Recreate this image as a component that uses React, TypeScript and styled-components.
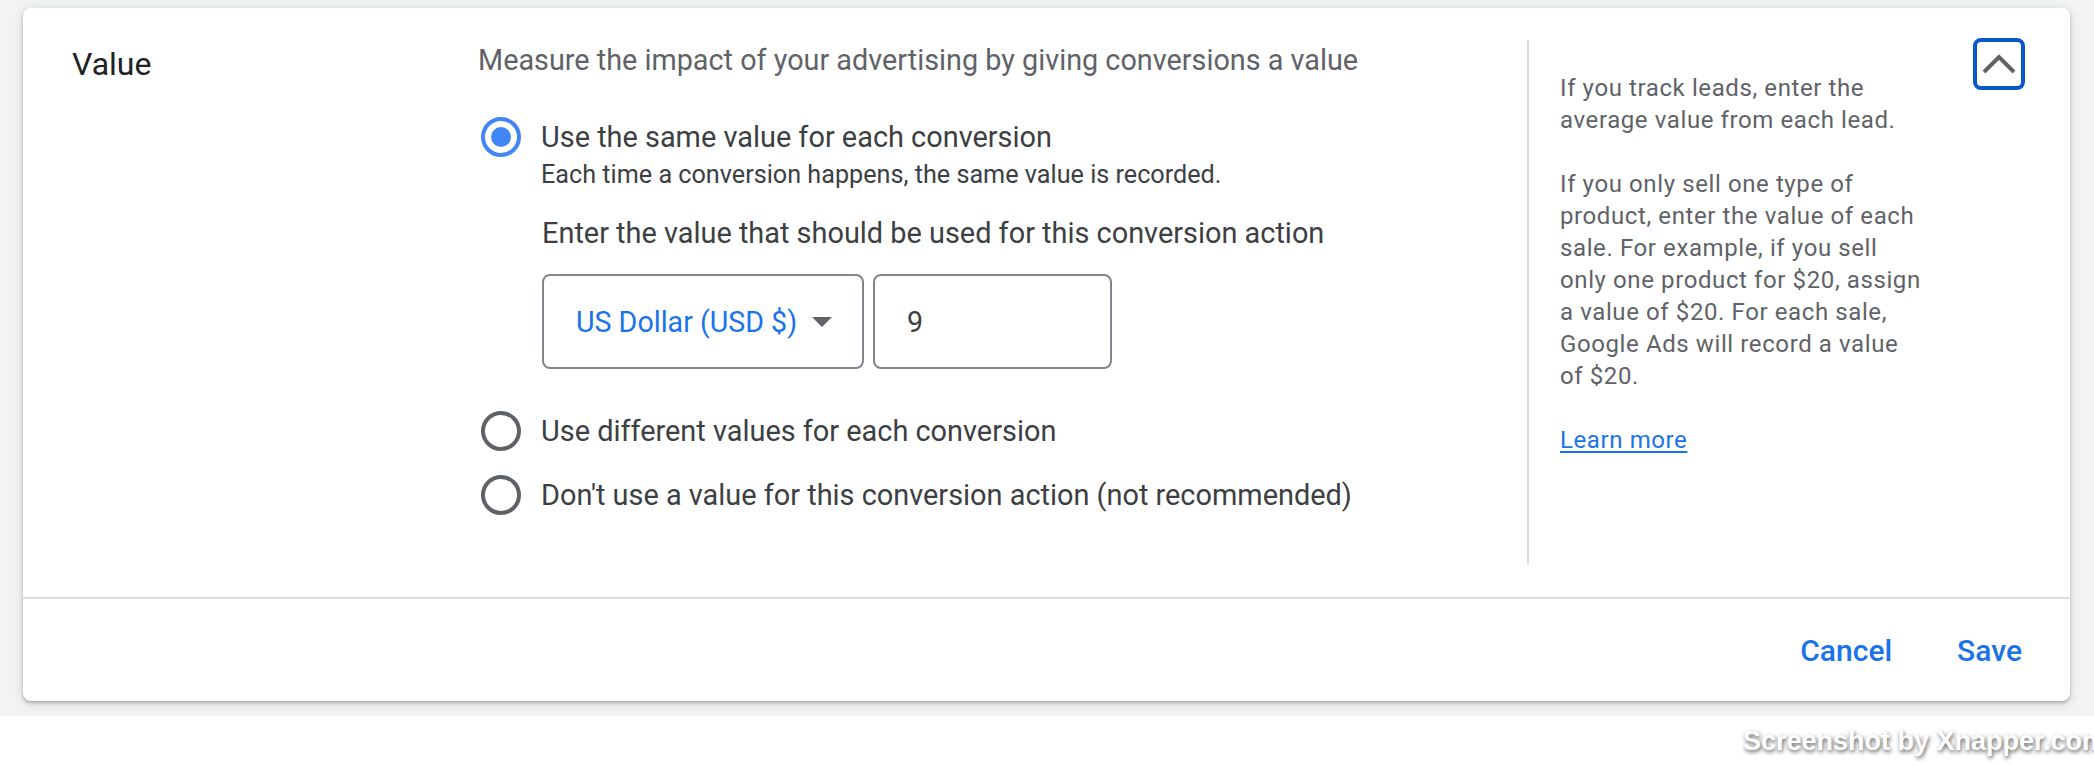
import React from "react";
import styled, { createGlobalStyle } from "styled-components";

const GlobalStyle = createGlobalStyle`
  html, body {
    margin: 0;
    padding: 0;
    background: #ffffff;
  }
  body {
    font-family: Roboto, "Liberation Sans", Arial, sans-serif;
    -webkit-font-smoothing: antialiased;
  }
`;

const helpLines = [
  ["If you track leads, enter the", "average value from each lead."],
  [
    "If you only sell one type of",
    "product, enter the value of each",
    "sale. For example, if you sell",
    "only one product for $20, assign",
    "a value of $20. For each sale,",
    "Google Ads will record a value",
    "of $20.",
  ],
];

const options = [
  {
    id: "same",
    label: "Use the same value for each conversion",
    hint: "Each time a conversion happens, the same value is recorded.",
  },
  { id: "different", label: "Use different values for each conversion" },
  {
    id: "none",
    label: "Don't use a value for this conversion action (not recommended)",
  },
];

const App: React.FC = () => {
  const selected = "same";

  return (
    <>
      <GlobalStyle />
      <Page>
        <Card>
          <Body>
            <Title>Value</Title>
            <Main>
              <Intro>
                Measure the impact of your advertising by giving conversions a
                value
              </Intro>
              <Options>
                {options.map((opt) => (
                  <Option key={opt.id}>
                    <OptionRow>
                      <Radio checked={opt.id === selected} />
                      <OptionLabel>{opt.label}</OptionLabel>
                    </OptionRow>
                    {opt.hint && <Hint>{opt.hint}</Hint>}
                    {opt.id === selected && (
                      <ValueBlock>
                        <ValuePrompt>
                          Enter the value that should be used for this
                          conversion action
                        </ValuePrompt>
                        <Fields>
                          <Select>
                            <span>US Dollar (USD $)</span>
                            <Caret />
                          </Select>
                          <ValueInput>9</ValueInput>
                        </Fields>
                      </ValueBlock>
                    )}
                  </Option>
                ))}
              </Options>
            </Main>
            <Aside>
              <HelpText>
                {helpLines.map((para, i) => (
                  <HelpPara key={i}>
                    {para.map((line, j) => (
                      <React.Fragment key={j}>
                        {line}
                        {j < para.length - 1 && <br />}
                      </React.Fragment>
                    ))}
                  </HelpPara>
                ))}
                <LearnMore href="#">Learn more</LearnMore>
              </HelpText>
            </Aside>
            <CollapseButton aria-label="Collapse">
              <svg width="34" height="20" viewBox="0 0 34 20">
                <path
                  d="M2 18 L17 3 L32 18"
                  fill="none"
                  stroke="#5f6368"
                  strokeWidth="4"
                />
              </svg>
            </CollapseButton>
          </Body>
          <Footer>
            <TextButton>Cancel</TextButton>
            <TextButton>Save</TextButton>
          </Footer>
        </Card>
      </Page>
      <Watermark>Screenshot by Xnapper.com</Watermark>
    </>
  );
};

export default App;

const Page = styled.div`
  background: #f1f3f4;
  padding: 8px 24px 15px 23px;
`;

const Card = styled.div`
  background: #ffffff;
  border-radius: 8px;
  box-shadow: 0 2px 3px rgba(60, 64, 67, 0.3), 0 2px 8px 2px rgba(60, 64, 67, 0.12);
`;

const Body = styled.div`
  display: flex;
  align-items: flex-start;
  height: 589px;
  box-sizing: border-box;
  padding: 32px 45px 33px 49px;
`;

const Title = styled.div`
  width: 406px;
  flex-shrink: 0;
  font-size: 32px;
  line-height: 40px;
  margin-top: 4px;
  color: #202124;
`;

const Main = styled.div`
  flex: 1;
`;

const Intro = styled.div`
  font-size: 28.8px;
  line-height: 40px;
  color: #5f6368;
`;

const Options = styled.div`
  margin-top: 37px;
  margin-left: 3px;
  display: flex;
  flex-direction: column;
  gap: 24px;
`;

const Option = styled.div``;

const OptionRow = styled.div`
  display: flex;
  align-items: center;
  gap: 20px;
`;

const Radio = styled.span<{ checked: boolean }>`
  width: 40px;
  height: 40px;
  box-sizing: border-box;
  border-radius: 50%;
  border: 4px solid ${(p) => (p.checked ? "#4285f4" : "#5f6368")};
  display: flex;
  align-items: center;
  justify-content: center;
  flex-shrink: 0;

  &::after {
    content: "";
    width: 20px;
    height: 20px;
    border-radius: 50%;
    background: #4285f4;
    display: ${(p) => (p.checked ? "block" : "none")};
  }
`;

const OptionLabel = styled.span`
  font-size: 28.9px;
  line-height: 40px;
  color: #3c4043;
`;

const Hint = styled.div`
  margin-left: 60px;
  font-size: 25.2px;
  line-height: 36px;
  color: #3c4043;
`;

const ValueBlock = styled.div`
  margin-left: 61px;
  margin-top: 20px;
`;

const ValuePrompt = styled.div`
  font-size: 28.9px;
  line-height: 40px;
  color: #3c4043;
`;

const Fields = styled.div`
  display: flex;
  gap: 9px;
  margin-top: 21px;
  margin-bottom: 18px;
`;

const FieldBox = styled.div`
  height: 95px;
  box-sizing: border-box;
  border: 2px solid #80868b;
  border-radius: 8px;
  display: flex;
  align-items: center;
  font-size: 28.6px;
`;

const Select = styled(FieldBox)`
  width: 322px;
  padding: 0 30px 0 32px;
  justify-content: space-between;
  color: #1a73e8;
`;

const Caret = styled.span`
  width: 0;
  height: 0;
  border-left: 10px solid transparent;
  border-right: 10px solid transparent;
  border-top: 10px solid #5f6368;
`;

const ValueInput = styled(FieldBox)`
  width: 239px;
  padding-left: 32px;
  color: #3c4043;
`;

const Aside = styled.div`
  align-self: stretch;
  width: 413px;
  flex-shrink: 0;
  border-left: 2px solid #dadce0;
  padding: 32px 0 0 31px;
`;

const HelpText = styled.div`
  font-size: 24px;
  line-height: 32px;
  letter-spacing: 0.6px;
  color: #5f6368;
`;

const HelpPara = styled.p`
  margin: 0 0 32px;
`;

const LearnMore = styled.a`
  color: #1a73e8;
  text-decoration: underline;
  text-underline-offset: 3px;
`;

const CollapseButton = styled.button`
  margin-left: auto;
  margin-top: -2px;
  width: 52px;
  height: 52px;
  box-sizing: border-box;
  border: 4px solid #0b57d0;
  border-radius: 8px;
  background: #ffffff;
  padding: 0;
  display: flex;
  align-items: center;
  justify-content: center;
  cursor: pointer;
`;

const Footer = styled.div`
  height: 104px;
  box-sizing: border-box;
  border-top: 2px solid #dadce0;
  display: flex;
  align-items: center;
  justify-content: flex-end;
  gap: 33px;
  padding-right: 32px;
`;

const TextButton = styled.button`
  background: none;
  border: none;
  padding: 0 16px;
  height: 72px;
  font-family: Roboto, "Liberation Sans", Arial, sans-serif;
  font-size: 30px;
  font-weight: 500;
  color: #1a73e8;
  cursor: pointer;
`;

const Watermark = styled.div`
  height: 50px;
  padding-left: 1743px;
  display: flex;
  align-items: center;
  white-space: nowrap;
  overflow: hidden;
  font-family: "Liberation Sans", Arial, sans-serif;
  font-weight: 700;
  font-size: 27px;
  color: #ffffff;
  text-shadow: 1px 2px 4px rgba(0, 0, 0, 0.65);
`;
